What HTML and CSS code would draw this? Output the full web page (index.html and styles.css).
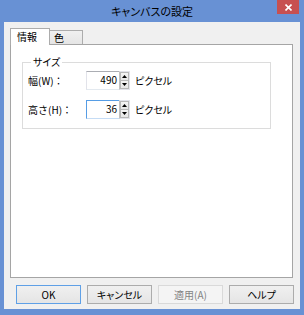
FILE: index.html
```html
<!DOCTYPE html>
<html lang="ja">
<head>
<meta charset="utf-8">
<link rel="stylesheet" href="styles.css">
</head>
<body>
<div class="window">
  <div class="titlebar">
    <span></span>
    <span class="title">キャンバスの設定</span>
    <span class="close-wrap">
      <span class="close">
        <svg width="7" height="7" viewBox="0 0 7 7"><path d="M0.5 0.5 L6.5 6.5 M6.5 0.5 L0.5 6.5" stroke="#fff" stroke-width="1.6"/></svg>
      </span>
    </span>
  </div>
  <div class="client">
    <div class="tabctl">
      <div class="tabs">
        <div class="tab active">情報</div>
        <div class="tab">色</div>
      </div>
      <div class="panel">
        <fieldset class="group">
          <legend>サイズ</legend>
          <div class="row">
            <span class="label">幅(W)：</span>
            <div class="spin">
              <span class="field">490</span>
              <span class="arrows">
                <span class="arrow"><svg width="5" height="3" viewBox="0 0 5 3"><path d="M2.5 0 L5 3 L0 3 Z" fill="#000"/></svg></span>
                <span class="arrow"><svg width="5" height="3" viewBox="0 0 5 3"><path d="M0 0 L5 0 L2.5 3 Z" fill="#000"/></svg></span>
              </span>
            </div>
            <span class="unit">ピクセル</span>
          </div>
          <div class="row">
            <span class="label">高さ(H)：</span>
            <div class="spin focused">
              <span class="field">36</span>
              <span class="arrows">
                <span class="arrow"><svg width="5" height="3" viewBox="0 0 5 3"><path d="M2.5 0 L5 3 L0 3 Z" fill="#000"/></svg></span>
                <span class="arrow"><svg width="5" height="3" viewBox="0 0 5 3"><path d="M0 0 L5 0 L2.5 3 Z" fill="#000"/></svg></span>
              </span>
            </div>
            <span class="unit">ピクセル</span>
          </div>
        </fieldset>
      </div>
    </div>
    <div class="buttons">
      <span class="btn default">OK</span>
      <span class="btn">キャンセル</span>
      <span class="btn disabled">適用(A)</span>
      <span class="btn">ヘルプ</span>
    </div>
  </div>
</div>
</body>
</html>
```

FILE: styles.css
```css
html, body {
  margin: 0;
  padding: 0;
}
body {
  font-family: "Noto Sans CJK JP", sans-serif;
  font-feature-settings: "palt";
  font-size: 10px;
  color: #000;
}
.window {
  width: 304px;
  height: 315px;
  box-sizing: border-box;
  background: #6891d4;
  padding: 0 4px 6px 4px;
  display: flex;
  flex-direction: column;
}
.titlebar {
  height: 22px;
  flex: none;
  display: grid;
  grid-template-columns: 1fr auto 1fr;
  align-items: start;
}
.title {
  font-size: 11px;
  line-height: 22px;
  color: #000;
}
.close-wrap {
  display: flex;
  justify-content: flex-end;
  padding-right: 1px;
}
.close {
  width: 22px;
  height: 14px;
  background: #c75050;
  display: flex;
  align-items: center;
  justify-content: center;
}
.close svg { display: block; }
.client {
  flex: 1;
  background: #f0f0f0;
  padding: 6px 6px 5px 6px;
  display: flex;
  flex-direction: column;
}
.tabctl {
  flex: 1;
  margin-right: 1px;
  display: flex;
  flex-direction: column;
}
.tabs {
  height: 16px;
  display: flex;
  align-items: flex-end;
  flex: none;
}
.tab {
  box-sizing: border-box;
  border: 1px solid #acacac;
  border-bottom: none;
  line-height: 12px;
}
.tab.active {
  width: 40px;
  height: 17px;
  margin-bottom: -1px;
  background: #fff;
  padding: 2px 0 0 6px;
  position: relative;
  z-index: 1;
}
.tab:not(.active) {
  width: 34px;
  height: 14px;
  margin-left: -1px;
  background: linear-gradient(#f0f0f0, #e5e5e5);
  padding: 1px 0 0 4px;
}
.panel {
  flex: 1;
  background: #fff;
  border: 1px solid #a5a5a5;
  padding: 11px 0 0 11px;
}
.group {
  width: 249px;
  box-sizing: border-box;
  margin: 0;
  border: 1px solid #dcdcdc;
  padding: 3px 5px 9px 5px;
  display: flex;
  flex-direction: column;
  gap: 10px;
}
.group legend {
  margin-left: 3px;
  padding: 0 2px;
  line-height: 12px;
}
.row {
  height: 19px;
  display: flex;
  align-items: center;
}
.label {
  width: 58px;
  flex: none;
  font-feature-settings: normal;
}
.spin {
  display: flex;
  height: 19px;
  box-sizing: border-box;
}
.field {
  width: 33px;
  box-sizing: border-box;
  border: 1px solid #abadb3;
  border-color: #abadb3 #e2e3ea #e3e9ef #e2e3ea;
  border-right: none;
  background: #fff;
  text-align: right;
  padding-right: 2px;
  line-height: 16px;
}
.spin.focused .field {
  border: 1px solid #569de5;
  border-right: none;
  border-bottom-color: #c5dcf5;
}
.arrows {
  width: 11px;
  display: flex;
  flex-direction: column;
  border: 1px solid #e2e3ea;
  border-left: 1px solid #c0c0c0;
  box-sizing: border-box;
  background: #fff;
}
.arrow {
  flex: 1;
  display: flex;
  align-items: center;
  justify-content: center;
  background: linear-gradient(#f4f4f4, #e6e6e6);
  border: 1px solid #b8b8b8;
}
.arrow + .arrow {
  border-top: none;
}
.arrow svg { display: block; }
.unit {
  margin-left: 5px;
}
.buttons {
  height: 19px;
  margin-top: 7px;
  padding-left: 6px;
  display: flex;
  justify-content: space-between;
  flex: none;
}
.btn {
  width: 65px;
  box-sizing: border-box;
  border: 1px solid #acacac;
  background: linear-gradient(#f0f0f0, #e5e5e5);
  display: flex;
  align-items: center;
  justify-content: center;
  line-height: 12px;
}
.btn.default {
  border-color: #5fa0e6;
}
.btn.disabled {
  border-color: #d9d9d9;
  background: #f4f4f4;
  color: #838383;
}
```
